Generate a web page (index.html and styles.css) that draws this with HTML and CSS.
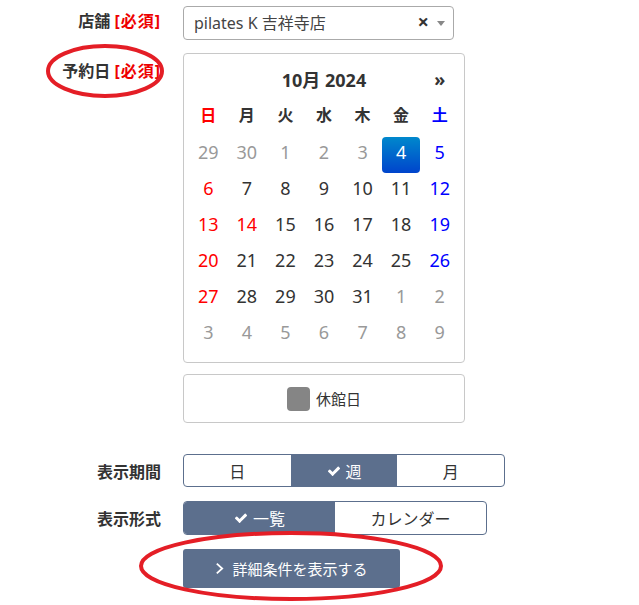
FILE: index.html
```html
<!DOCTYPE html>
<html lang="ja">
  <head>
    <meta charset="UTF-8" />
    <title>予約検索</title>
    <link rel="stylesheet" href="styles.css">
  </head>
  <body>
    <div class="form">
      <!-- 店舗 -->
      <div class="row row-shop">
        <div class="label">店舗 <span class="req">[必須]</span></div>
        <div class="field">
          <div class="select">
            <span class="select-text">pilates K 吉祥寺店</span>
            <span class="select-clear">×</span>
            <span class="select-arrow"></span>
          </div>
        </div>
      </div>

      <!-- 予約日 -->
      <div class="row row-date">
        <div class="label label-date">予約日 <span class="req">[必須]</span></div>
        <div class="field">
          <div class="calendar">
            <table>
              <tr class="cal-head">
                <th></th>
                <th colspan="5" class="cal-title">10月 2024</th>
                <th class="cal-next">»</th>
              </tr>
              <tr class="cal-dow">
                <th class="sun">日</th><th>月</th><th>火</th><th>水</th><th>木</th><th>金</th><th class="sat">土</th>
              </tr>
              <tr>
                <td class="old">29</td><td class="old">30</td><td class="old">1</td><td class="old">2</td><td class="old">3</td><td class="active">4</td><td class="sat">5</td>
              </tr>
              <tr>
                <td class="sun">6</td><td>7</td><td>8</td><td>9</td><td>10</td><td>11</td><td class="sat">12</td>
              </tr>
              <tr>
                <td class="sun">13</td><td class="sun">14</td><td>15</td><td>16</td><td>17</td><td>18</td><td class="sat">19</td>
              </tr>
              <tr>
                <td class="sun">20</td><td>21</td><td>22</td><td>23</td><td>24</td><td>25</td><td class="sat">26</td>
              </tr>
              <tr>
                <td class="sun">27</td><td>28</td><td>29</td><td>30</td><td>31</td><td class="old">1</td><td class="old">2</td>
              </tr>
              <tr>
                <td class="old">3</td><td class="old">4</td><td class="old">5</td><td class="old">6</td><td class="old">7</td><td class="old">8</td><td class="old">9</td>
              </tr>
            </table>
          </div>
          <div class="legend">
            <span class="legend-box"></span>
            <span>休館日</span>
          </div>
        </div>
      </div>

      <!-- 表示期間 -->
      <div class="row row-period">
        <div class="label label-mid">表示期間</div>
        <div class="field">
          <div class="btn-group period">
            <span class="btn">日</span>
            <span class="btn on">
              <svg class="check" viewBox="0 0 1792 1792"><path d="M1671 566q0 40-28 68l-724 724-136 136q-28 28-68 28t-68-28l-136-136-362-362q-28-28-28-68t28-68l136-136q28-28 68-28t68 28l294 295 656-657q28-28 68-28t68 28l136 136q28 28 28 68z"/></svg>週
            </span>
            <span class="btn">月</span>
          </div>
        </div>
      </div>

      <!-- 表示形式 -->
      <div class="row row-format">
        <div class="label label-mid">表示形式</div>
        <div class="field">
          <div class="btn-group format">
            <span class="btn on">
              <svg class="check" viewBox="0 0 1792 1792"><path d="M1671 566q0 40-28 68l-724 724-136 136q-28 28-68 28t-68-28l-136-136-362-362q-28-28-28-68t28-68l136-136q28-28 68-28t68 28l294 295 656-657q28-28 68-28t68 28l136 136q28 28 28 68z"/></svg>一覧
            </span>
            <span class="btn">カレンダー</span>
          </div>
        </div>
      </div>

      <div class="row row-detail">
        <div class="label"></div>
        <div class="field">
          <div class="detail-btn">
            <svg class="chevron" viewBox="0 0 10 14"><polyline points="2,1.5 8,7 2,12.5"/></svg>
            詳細条件を表示する
          </div>
        </div>
      </div>
    </div>

    <!-- annotation marks -->
    <svg class="marks" width="639" height="605" viewBox="0 0 639 605">
      <ellipse cx="105" cy="71" rx="57" ry="25" />
      <ellipse cx="291" cy="566" rx="150" ry="33" />
    </svg>
  </body>
</html>
```

FILE: styles.css
```css
body {
  margin: 0;
  padding: 0;
  background: #fff;
  color: #333;
  font-family: "Noto Sans", "Noto Sans CJK JP", sans-serif;
  position: relative;
  width: 639px;
  height: 605px;
  overflow: hidden;
}

.form {
  padding-top: 6px;
}

.row {
  display: flex;
  gap: 22px;
}

.label {
  width: 161px;
  flex: none;
  text-align: right;
  font-weight: bold;
  font-size: 16px;
  color: #333;
}
.req {
  color: #e00;
  letter-spacing: 1px;
}

/* 店舗 select */
.row-shop .label {
  line-height: 31px;
}
.select {
  width: 271px;
  height: 34px;
  box-sizing: border-box;
  border: 1px solid #aaa;
  border-radius: 4px;
  display: flex;
  align-items: center;
  padding: 0 8px 0 10px;
  font-size: 16px;
  color: #444;
}
.select-text {
  flex: 1;
  margin-top: -3px;
}
.select-clear {
  font-weight: bold;
  font-size: 20px;
  color: #333;
  margin-right: 8px;
  margin-top: -3px;
}
.select-arrow {
  width: 0;
  height: 0;
  border-left: 4px solid transparent;
  border-right: 4px solid transparent;
  border-top: 5px solid #888;
}

/* 予約日 calendar */
.row-date {
  margin-top: 13px;
}
.label-date {
  padding-top: 5px;
}
.calendar {
  width: 282px;
  box-sizing: border-box;
  border: 1px solid #c8c8c8;
  border-radius: 4px;
  padding: 4px 5px 9px;
}
.calendar table {
  width: 270px;
  table-layout: fixed;
  border-collapse: collapse;
}
.calendar th,
.calendar td {
  padding: 0;
  text-align: center;
}
.cal-head th {
  height: 42px;
  font-size: 18px;
  font-weight: bold;
}
.cal-title {
  padding-top: 2px;
}
.cal-next {
  font-size: 18px;
}
.cal-dow th {
  height: 37px;
  vertical-align: top;
  line-height: 31px;
  font-size: 16px;
  font-weight: bold;
}
.calendar td {
  height: 36px;
  vertical-align: top;
  line-height: 30px;
  font-size: 18px;
  color: #333;
  border-radius: 4px;
}
.calendar .sun {
  color: #f00;
}
.calendar .sat {
  color: #00f;
}
.calendar .old {
  color: #999;
}
.calendar .active {
  color: #fff;
  background: linear-gradient(to bottom, #0088cc, #0044cc);
}

.legend {
  margin-top: 11px;
  width: 282px;
  height: 49px;
  box-sizing: border-box;
  border: 1px solid #c8c8c8;
  border-radius: 4px;
  display: flex;
  align-items: center;
  justify-content: center;
  gap: 6px;
  font-size: 15px;
  color: #333;
}
.legend-box {
  width: 23px;
  height: 24px;
  background: #858585;
  border-radius: 4px;
}

/* button groups */
.row-period {
  margin-top: 31px;
}
.row-format {
  margin-top: 14px;
}
.label-mid {
  align-self: center;
}
.btn-group {
  display: flex;
  box-sizing: border-box;
  border: 1px solid #5c6f8d;
  border-radius: 4px;
  overflow: hidden;
}
.period {
  width: 322px;
  height: 33px;
}
.format {
  width: 304px;
  height: 34px;
}
.btn {
  flex: 1;
  display: flex;
  align-items: center;
  justify-content: center;
  gap: 5px;
  font-size: 16px;
  color: #333;
}
.btn.on {
  background: #5c6f8d;
  color: #fff;
}
.check {
  width: 14px;
  height: 14px;
  fill: #fff;
}

.row-detail {
  margin-top: 14px;
}
.detail-btn {
  width: 217px;
  height: 39px;
  background: #5c6f8d;
  border-radius: 3px;
  color: #fff;
  font-size: 15px;
  display: flex;
  align-items: center;
  justify-content: center;
  gap: 8px;
}
.chevron {
  width: 9px;
  height: 13px;
  fill: none;
  stroke: #fff;
  stroke-width: 2;
}

/* red annotation ellipses */
.marks {
  position: absolute;
  top: 0;
  left: 0;
  pointer-events: none;
}
.marks ellipse {
  fill: none;
  stroke: #e41e26;
  stroke-width: 4;
}
```
